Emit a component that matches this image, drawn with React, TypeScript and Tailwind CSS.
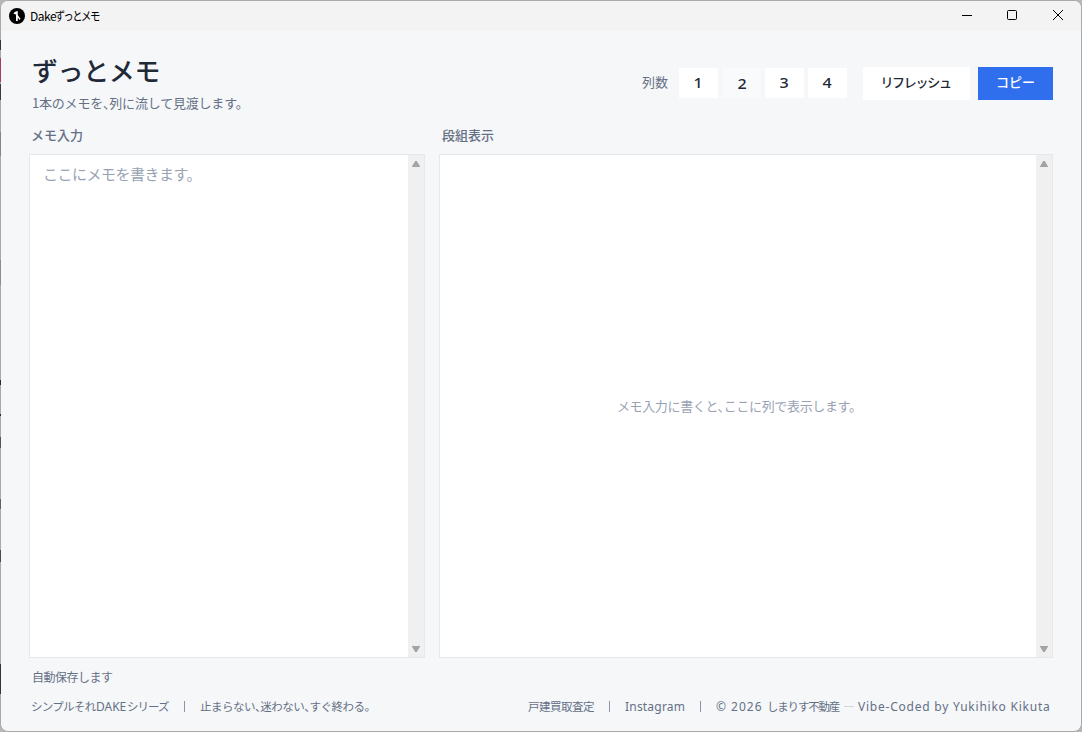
import React from 'react';

const columnCounts = [1, 2, 3, 4];

const AppIcon = () => (
  <svg className="w-4 h-4" viewBox="0 0 16 16">
    <circle cx="8" cy="8" r="8" fill="#000" />
    <path d="M5.200 4.400 7.200 3.300h1.700L8.700 6.900l2.800 3.900-1 1.200-1.700-2.400v3.300H7V6.500L4.500 5.800Z" fill="#fff" />
  </svg>
);

const TitleBar = () => (
  <div className="h-[30px] shrink-0 flex items-center bg-[#f3f3f4]">
    <AppIcon />
    <div className="ml-[5px] pb-px flex text-[12px] leading-4 text-black whitespace-nowrap">
      <span className="w-[25px] tracking-[-0.5px]">Dake</span>
      <span className="w-[46px] origin-left scale-x-[0.83] tracking-[-0.2px] [font-feature-settings:'palt'] text-[12.5px]">
        ずっとメモ
      </span>
    </div>
    <div className="ml-auto flex items-center text-black">
      <svg className="w-[46px] h-[30px]" viewBox="0 0 46 30" fill="none" stroke="currentColor">
        <path d="M19 14.500H29" />
      </svg>
      <svg className="w-[46px] h-[30px]" viewBox="0 0 46 30" fill="none" stroke="currentColor">
        <rect x="18.500" y="9.500" width="9" height="9" rx="1" />
      </svg>
      <svg className="w-[46px] h-[30px]" viewBox="0 0 46 30" fill="none" stroke="currentColor">
        <path d="M18 9 28 19M28 9 18 19" />
      </svg>
    </div>
  </div>
);

const Scrollbar = () => (
  <div className="w-4 shrink-0 flex flex-col justify-between items-center bg-[#f0f0f0] pt-[5px] pb-1">
    <svg className="w-[10px] h-[8px]" viewBox="0 0 10 8">
      <path d="M1 6.500 4.200 1h1.600L9 6.500v.5H1Z" fill="#a3a3a3" />
    </svg>
    <svg className="w-[10px] h-[8px]" viewBox="0 0 10 8">
      <path d="M1 1.500 4.200 7h1.600L9 1.500V1H1Z" fill="#a3a3a3" />
    </svg>
  </div>
);

const Divider = () => <span className="w-px h-[11px] shrink-0 bg-[#8c95a5]" />;

const App = () => {
  return (
    <div
      className="relative w-[1082px] h-[732px] bg-[#b5b7b9] text-[#667085]"
      style={{ fontFamily: '"Noto Sans CJK JP", "Noto Sans", sans-serif', fontFeatureSettings: '"halt"' }}
    >
      <div className="h-full border border-[#a9a9aa] rounded-lg overflow-hidden bg-[#f5f7f9] flex flex-col">
        <div className="pl-2 bg-[#f3f3f4]">
          <TitleBar />
        </div>

        {/* Header */}
        <header className="h-[90px] shrink-0 flex items-start justify-between pl-[31px] pr-7">
          <div className="pt-[21px]">
            <h1 className="text-[26px] leading-9 font-medium tracking-[-0.4px] text-[#1f2937] whitespace-nowrap">
              ずっとメモ
            </h1>
            <p className="mt-[5px] text-[13px] leading-5 tracking-[-0.2px] whitespace-nowrap">
              1本のメモを、列に流して見渡します。
            </p>
          </div>

          <div className="pt-9 flex items-start text-[13px] font-medium text-[#1f2937]">
            <span className="mr-[11px] leading-[29px] font-normal text-[#667085]">列数</span>
            <div className="flex gap-1 pt-px font-['Noto_Sans']">
              {columnCounts.map((count) => (
                <button
                  key={count}
                  className={
                    count === 2
                      ? 'w-[39px] h-[30px] pl-px bg-[#f8fafc] font-medium text-[14px]'
                      : 'w-[39px] h-[30px] pb-0.5 bg-white font-medium text-[14px]'
                  }
                >
                  <span className="inline-block scale-x-[1.15]">{count}</span>
                </button>
              ))}
            </div>
            <button className="ml-4 w-[107px] h-[33px] pb-[3px] pr-[2px] bg-white tracking-[-1.3px]">リフレッシュ</button>
            <button className="ml-2 w-[75px] h-[33px] pb-[3px] bg-[#2f6fed] text-white">コピー</button>
          </div>
        </header>

        {/* Panels */}
        <main className="flex gap-[14px] pl-7 pr-7">
          <section className="w-[396px]">
            <h2 className="h-[33px] pt-1 pl-[2px] text-[13px] leading-5 font-medium">メモ入力</h2>
            <div className="h-[504px] flex border border-[#e4e8eb] bg-white">
              <textarea
                className="flex-1 resize-none outline-none px-[13px] pt-[8px] text-[15px] leading-[22px] tracking-[-0.5px] placeholder:text-[#98a2b3]"
                placeholder="ここにメモを書きます。"
              />
              <Scrollbar />
            </div>
          </section>

          <section className="flex-1">
            <h2 className="h-[33px] pt-1 pl-[3px] text-[13px] leading-5 font-medium">段組表示</h2>
            <div className="h-[504px] flex border border-[#e4e8eb] bg-white">
              <div className="flex-1 flex items-center justify-center pb-px pr-1 text-[13px] tracking-[-0.35px] text-[#98a2b3]">
                メモ入力に書くと、ここに列で表示します。
              </div>
              <Scrollbar />
            </div>
          </section>
        </main>

        <div className="mt-[9px] pl-[31px] text-[12px] leading-5 tracking-[-0.5px]">自動保存します</div>

        {/* Footer */}
        <footer className="mt-[9px] pl-[30px] pr-[30px] flex justify-between text-[11.5px] leading-5 whitespace-nowrap">
          <div className="flex items-center">
            <span className="w-[65px] pb-px tracking-[-0.7px]">シンプルそれ</span>
            <span className="w-[31px] pt-px font-['Noto_Sans'] text-[12px]">DAKE</span>
            <span className="w-[43px] pb-px tracking-[-1px]">シリーズ</span>
            <span className="w-[14px]" />
            <Divider />
            <span className="ml-[15px] pb-px tracking-[-0.5px]">止まらない、迷わない、すぐ終わる。</span>
          </div>
          <div className="flex items-center">
            <span className="w-[67px] pb-px tracking-[-0.5px]">戸建買取査定</span>
            <span className="w-[14px]" />
            <Divider />
            <span className="ml-[15px] w-[61px] pt-px font-['Noto_Sans'] text-[12px] tracking-[0.2px]">Instagram</span>
            <span className="w-[14px]" />
            <Divider />
            <span className="ml-[15px] w-[51px] pt-px font-['Noto_Sans'] text-[12px] tracking-[1px]">© 2026</span>
            <span className="w-[73px] pb-px tracking-[-1.2px]">しまりす不動産</span>
            <span className="ml-[4px] w-[10px] h-px shrink-0 bg-[#d0d5dc]" />
            <span className="ml-[4px] w-[193px] pt-px font-['Noto_Sans'] text-[12px] tracking-[0.77px]">
              Vibe-Coded by Yukihiko Kikuta
            </span>
          </div>
        </footer>
      </div>

      {/* Desktop showing past the window's left edge */}
      <div className="absolute left-0 top-10 w-px flex flex-col">
        <span className="h-[10px] bg-[#333333]" />
        <span className="mt-2 h-6 bg-[#a83d59]" />
        <span className="mt-[2px] h-4 bg-[#3a3a3d]" />
        <span className="mt-8 h-6 bg-[#84868a]" />
        <span className="mt-[104px] h-[25px] bg-[#8d8d8d]" />
        <span className="mt-[95px] h-[5px] bg-[#2b2b2b]" />
        <span className="mt-[29px] h-[2px] bg-[#2b2b2b]" />
        <span className="mt-[21px] h-[11px] bg-[#555555]" />
        <span className="mt-[51px] h-[10px] bg-[#606060]" />
        <span className="mt-[41px] h-[12px] bg-[#4a4a4a]" />
        <span className="mt-[102px] h-[30px] bg-[#333436]" />
      </div>
    </div>
  );
};

export default App;
